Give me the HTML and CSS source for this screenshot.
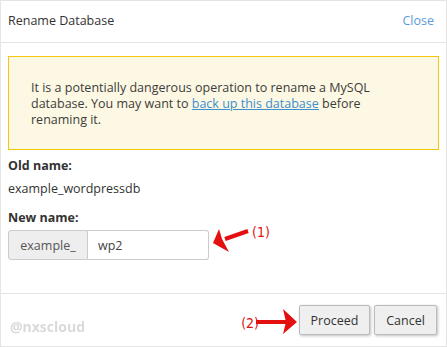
FILE: index.html
```html
<!DOCTYPE html>
<html lang="en">
<head>
  <meta charset="UTF-8" />
  <title>Rename Database</title>
  <link rel="stylesheet" href="styles.css">
</head>
<body>
  <div class="modal">
    <div class="modal-header">
      <span class="modal-title">Rename Database</span>
      <a class="close-link" href="#">Close</a>
    </div>

    <div class="modal-body">
      <div class="alert">
        It is a potentially dangerous operation to rename a MySQL database. You may want to <a href="#">back up this database</a> before renaming it.
      </div>

      <div class="field-label">Old name:</div>
      <div class="field-value">example_wordpressdb</div>

      <div class="field-label label-new">New name:</div>
      <div class="input-row">
        <div class="input-group">
          <span class="input-addon">example_</span>
          <input type="text" class="input-text" value="wp2" />
        </div>
        <div class="note note-one">
          <svg width="40" height="32" viewBox="0 0 40 32">
            <path d="M37 6 L14 14" stroke="#e3100f" stroke-width="4" fill="none" />
            <path d="M2 18 L8 4 L11 14 L18 27 Z" fill="#e3100f" />
          </svg>
          <span class="note-text">(1)</span>
        </div>
      </div>
    </div>

    <div class="modal-footer">
      <span class="watermark">@nxscloud</span>
      <div class="footer-actions">
        <div class="note note-two">
          <span class="note-text">(2)</span>
          <svg width="42" height="28" viewBox="0 0 42 28">
            <path d="M0 13 L30 13" stroke="#e3100f" stroke-width="4" fill="none" />
            <path d="M41 13 L27 0 L30 13 L27 25 Z" fill="#e3100f" />
          </svg>
        </div>
        <button class="btn btn-proceed">Proceed</button>
        <button class="btn btn-cancel">Cancel</button>
      </div>
    </div>
  </div>
</body>
</html>
```

FILE: styles.css
```css
* { box-sizing: border-box; }
body {
  margin: 0;
  background: #fff;
  font-family: 'Open Sans', 'Noto Sans', sans-serif;
  font-size: 12.5px;
  color: #333;
}
.modal {
  width: 447px;
  height: 347px;
  border: 1px solid #e4e4e4;
  display: flex;
  flex-direction: column;
}
.modal-header {
  height: 42px;
  border-bottom: 1px solid #e4e4e4;
  display: flex;
  align-items: center;
  justify-content: space-between;
  padding: 0 12px 2px 7px;
}
.modal-title {
  color: #333;
}
.close-link {
  color: #5a9bd8;
  text-decoration: none;
}
.modal-body {
  padding: 13px 7px 0;
}
.alert {
  background: #fdf8e3;
  border: 1px solid #f4c70c;
  padding: 23px 22px 21px;
  line-height: 16px;
  color: #3c3c3c;
}
.alert a {
  color: #3b8ed0;
}
.field-label {
  font-weight: 700;
  line-height: 18px;
  margin-top: 7px;
}
.field-value {
  line-height: 18px;
  margin-top: 5px;
}
.label-new {
  margin-top: 11px;
}
.input-row {
  position: relative;
  margin-top: 3px;
}
.input-group {
  display: flex;
  width: 201px;
  height: 30px;
}
.input-addon {
  width: 80px;
  background: #eee;
  border: 1px solid #ccc;
  border-radius: 3px 0 0 3px;
  color: #555;
  display: flex;
  align-items: center;
  justify-content: center;
}
.input-text {
  flex: 1;
  min-width: 0;
  border: 1px solid #ccc;
  border-left: none;
  border-radius: 0 3px 3px 0;
  padding: 0 10px;
  font: inherit;
  color: #444;
  outline: none;
}
.note {
  position: absolute;
  display: flex;
  color: #e3100f;
}
.note-text {
  font-family: 'Liberation Sans Narrow', 'DejaVu Sans Condensed', sans-serif;
  font-size: 14px;
  line-height: 16px;
}
.note-one {
  left: 203px;
  top: -5px;
}
.note-one .note-text {
  margin-top: -1px;
  margin-left: 1px;
}
.modal-footer {
  margin-top: auto;
  height: 53px;
  border-top: 1px solid #e4e4e4;
  display: flex;
  align-items: flex-start;
  justify-content: space-between;
  padding: 11px 9px 0 9px;
}
.watermark {
  margin-top: 12px;
  font-weight: 700;
  font-size: 14px;
  color: #dadada;
  filter: blur(0.6px);
}
.footer-actions {
  position: relative;
  display: flex;
  gap: 4px;
}
.note-two {
  right: 100%;
  top: 4px;
  align-items: center;
  margin-right: 1px;
}
.note-two .note-text {
  margin-right: -3px;
}
.btn {
  height: 30px;
  padding: 0;
  background: #efefef;
  border: 1px solid #bbb;
  border-radius: 2px;
  box-shadow: 1px 1px 3px rgba(0, 0, 0, 0.25);
  font: inherit;
  color: #333;
}
.btn-proceed {
  width: 71px;
}
.btn-cancel {
  width: 63px;
}
```
